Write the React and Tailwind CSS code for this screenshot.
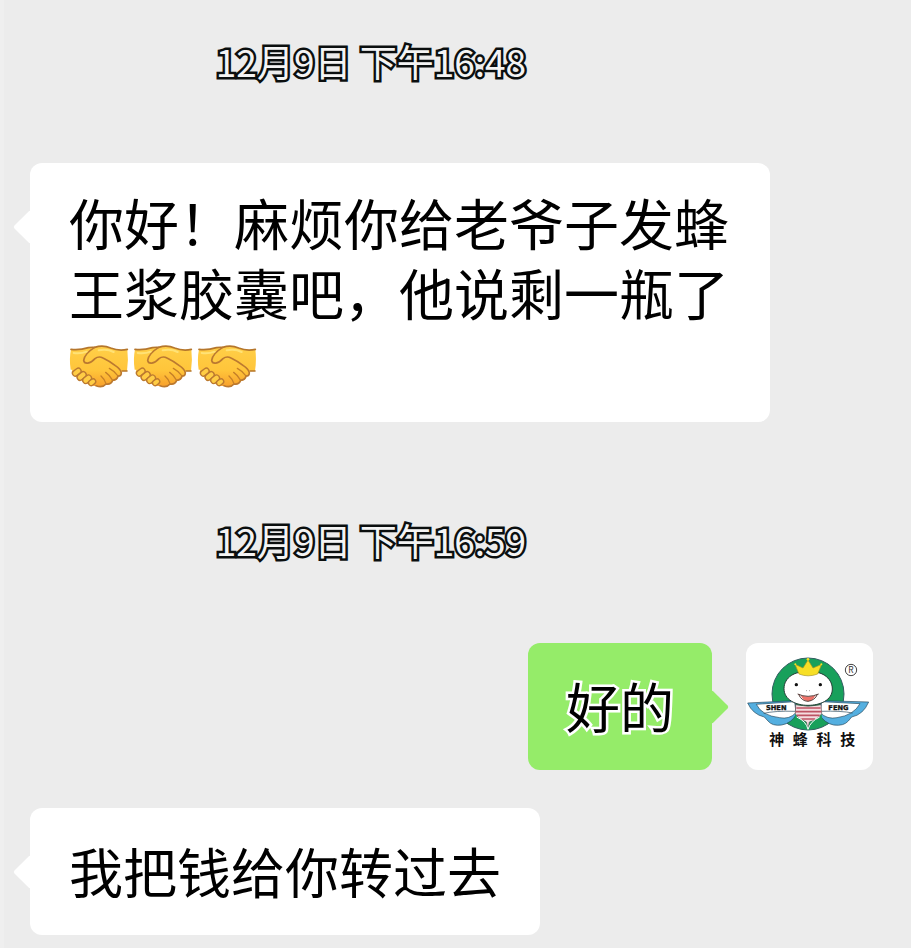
import React from "react";

function Timestamp({ children }) {
  return (
    <time className="mr-[169px] block text-center text-[37px] leading-[48px] text-[#f4f4f4] [-webkit-text-stroke:5px_#0b0f0f] [paint-order:stroke_fill] [stroke-linejoin:round]">
      {children}
    </time>
  );
}

function Handshake() {
  return (
    <svg
      role="img"
      aria-label="握手"
      viewBox="30 26 180 135"
      className="inline-block h-[45px] w-[60px]"
      strokeLinecap="round"
      strokeLinejoin="round"
    >
      <defs>
        <linearGradient id="skin" x1="0" y1="0" x2="0" y2="1">
          <stop offset="0" stopColor="#ffcf48" />
          <stop offset="0.6" stopColor="#ffc53a" />
          <stop offset="1" stopColor="#f79f2c" />
        </linearGradient>
      </defs>
      <path
        d="M36 42 Q62 45 88 37 Q98 35 107 36 Q132 28 155 38 Q180 48 205 42 Q209 74 204 107 L188 108 Q190 120 177 124 Q175 136 160 136 Q156 150 141 147 Q130 161 111 151 Q104 154 97 148 Q84 150 82 141 Q66 142 66 129 Q50 130 51 119 Q34 116 40 103 L35 103 Q30 72 36 42Z"
        fill="url(#skin)"
      />
      <path
        d="M36 42 Q62 45 88 37 Q98 35 107 36 Q132 28 155 38 Q180 48 205 42 M204 107 L190 107"
        fill="none"
        stroke="#b5762c"
        strokeWidth="5"
      />
      <path
        d="M107 36 C91 46 76 58 74 75 C76 88 94 86 108 70 Q119 61 132 68 Q151 77 169 91 Q184 101 187 112 Q187 122 177 122 Q175 134 161 135 Q155 149 141 146 Q130 159 111 151"
        fill="none"
        stroke="#bb7930"
        strokeWidth="5"
      />
      <path
        d="M151 99 Q168 108 177 122 M140 111 Q154 121 160 134 M126 122 Q138 133 141 145"
        fill="none"
        stroke="#c58028"
        strokeWidth="4"
      />
      <g fill="#ffcd45" stroke="#bb7930" strokeWidth="4">
        <rect x="39" y="102" width="28" height="17" rx="8" transform="rotate(-38 53 110)" />
        <rect x="53" y="113" width="30" height="18" rx="9" transform="rotate(-40 68 122)" />
        <rect x="70" y="123" width="29" height="18" rx="9" transform="rotate(-40 84 132)" />
        <rect x="88" y="133" width="23" height="16" rx="8" transform="rotate(-38 99 141)" />
      </g>
      <path d="M44 53 Q65 56 83 49 M119 45 Q145 40 164 50" fill="none" stroke="#ffe276" strokeWidth="6" />
    </svg>
  );
}

function Avatar() {
  return (
    <svg
      role="img"
      aria-label="神蜂科技"
      viewBox="33 23 381 381"
      className="size-[127px] shrink-0 rounded-xl bg-white"
    >
      <circle cx="219" cy="176" r="108" fill="#18a05b" stroke="#315d60" strokeWidth="3" />
      <g stroke="#25475b" strokeWidth="2" strokeLinejoin="round">
        <path d="M38 203 L181 196 L185 236 Q169 264 140 269 Q112 273 99 257 L88 245 Q53 237 38 203Z" fill="#54afe0" />
        <path d="M401 200 L257 196 L253 236 Q267 263 296 269 Q326 273 340 257 L350 245 Q385 238 401 200Z" fill="#54afe0" />
        <path d="M64 207 L179 199 L183 232 Q163 253 134 247 Q80 241 64 207Z" fill="white" />
        <path d="M375 205 L260 199 L255 232 Q277 253 306 247 Q356 240 375 205Z" fill="white" />
        <path d="M86 234 Q120 226 181 228 M353 233 Q319 226 257 228" fill="none" />
      </g>
      <path d="M182 208 Q219 217 258 208 L260 235 Q248 253 223 260 L219 282 L214 260 Q187 249 181 235Z" fill="#f5dce0" stroke="#594c4e" strokeWidth="2" />
      <path d="M184 218 H257 M182 229 H259 M185 240 H254 M199 251 H240" stroke="#bd5263" strokeWidth="5" />
      <path d="M181 236 Q190 254 212 259 L219 282 L226 259 Q250 253 260 236 L262 262 Q242 280 219 283 Q196 280 178 262Z" fill="#18a05b" />
      <path d="M185 245 Q214 258 219 282 Q226 258 254 245" fill="none" stroke="white" strokeWidth="3" />
      <path d="M219 111 C256 104 292 126 292 161 C292 195 255 210 219 210 C182 210 147 193 147 160 C147 126 181 105 219 111Z" fill="white" stroke="#263d37" strokeWidth="3" />
      <path d="M192 116 L180 87 L204 98 L219 74 L234 98 L260 87 L248 116 Q219 127 192 116Z" fill="#f7df26" stroke="#a7941f" strokeWidth="2" />
      <circle cx="219" cy="72" r="4" fill="#f7df26" />
      <circle cx="181" cy="87" r="3" fill="#f7df26" />
      <circle cx="259" cy="87" r="3" fill="#f7df26" />
      <circle cx="184" cy="148" r="5" fill="#111" />
      <circle cx="256" cy="148" r="5" fill="#111" />
      <path d="M214 166 H216 M222 166 H224" stroke="#777" strokeWidth="3" />
      <path d="M197 180 Q219 188 241 180 Q235 197 219 198 Q203 196 197 180Z" fill="#ee7269" />
      <path d="M188 176 Q219 190 251 176 M191 177 Q199 197 219 198 Q240 195 247 177" fill="none" stroke="#583d39" strokeWidth="3" />
      <g fill="#111" stroke="#111" strokeWidth="1" className="font-['DejaVu_Sans',sans-serif] font-bold" fontSize="20">
        <text x="93" y="223">SHEN</text>
        <text x="280" y="223">FENG</text>
      </g>
      <circle cx="348" cy="104" r="17" fill="white" stroke="#444" strokeWidth="3" />
      <text x="348" y="113" textAnchor="middle" fontSize="25" fill="#333">R</text>
      <g fill="#111" fontSize="45" fontWeight="700" textAnchor="middle">
        <text x="125" y="330">神</text>
        <text x="196" y="330">蜂</text>
        <text x="267" y="330">科</text>
        <text x="338" y="330">技</text>
      </g>
    </svg>
  );
}

function Received({ children }) {
  return (
    <div className="relative ml-[30px] w-fit max-w-[740px] rounded-xl bg-white px-[39px]">
      <span className="absolute top-[52px] -left-3 size-6 rotate-45 rounded-xs bg-white" />
      <div className="relative leading-[70px] text-black">{children}</div>
    </div>
  );
}

function Sent({ children }) {
  return (
    <div className="mr-[38px] flex items-start justify-end gap-[34px]">
      <div className="relative rounded-xl bg-[#95ec69] px-[38px] pt-7 pb-[29px]">
        <span className="absolute top-[52px] -right-3 size-6 rotate-45 rounded-xs bg-[#95ec69]" />
        <p className="relative text-[54px] leading-[70px] text-black [-webkit-text-stroke:5px_white] [paint-order:stroke_fill] [stroke-linejoin:round]">
          {children}
        </p>
      </div>
      <Avatar />
    </div>
  );
}

export default function App() {
  return (
    <main
      lang="zh-CN"
      className="min-h-screen border-l-4 border-[#efefef] bg-[#ececec] pt-[37px] pb-3 font-['Noto_Sans_CJK_SC',sans-serif]"
    >
      <div className="-ml-1 flex flex-col">
        <Timestamp>12月9日 下午16:48</Timestamp>
        <div className="mt-[78px]">
          <Received>
            <p className="pt-[23px] text-[55px]">你好！麻烦你给老爷子发蜂王浆胶囊吧，他说剩一瓶了</p>
            <div className="flex items-start gap-1 pt-[18px] pb-[33px]">
              <Handshake />
              <Handshake />
              <Handshake />
            </div>
          </Received>
        </div>
        <div className="mt-[94px]">
          <Timestamp>12月9日 下午16:59</Timestamp>
        </div>
        <div className="mt-[79px]">
          <Sent>好的</Sent>
        </div>
        <div className="mt-[38px]">
          <Received>
            <p className="pt-7 pb-[29px] text-[54px]">我把钱给你转过去</p>
          </Received>
        </div>
      </div>
    </main>
  );
}
